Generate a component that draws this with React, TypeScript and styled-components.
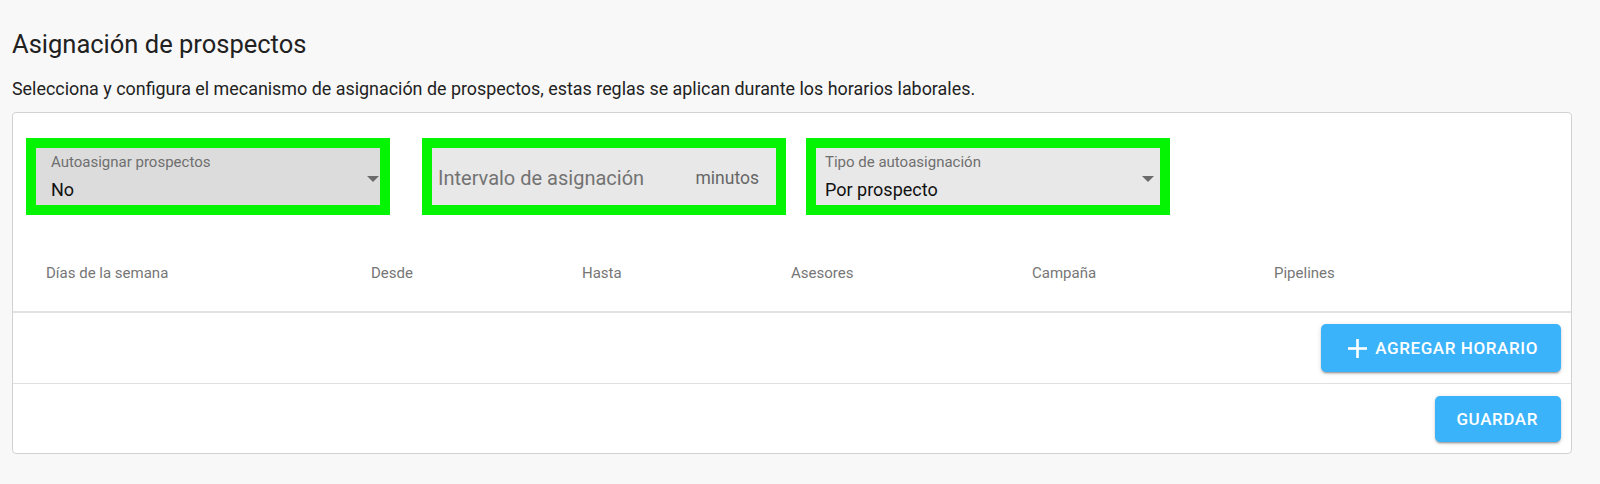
import React from "react";
import styled, { createGlobalStyle } from "styled-components";

const GlobalStyle = createGlobalStyle`
  html, body {
    margin: 0;
    padding: 0;
    background: #f8f8f8;
    font-family: Roboto, "Liberation Sans", Arial, sans-serif;
  }
  * { box-sizing: border-box; }
`;

const Page = styled.div`
  padding: 29px 0 0 12px;
  width: 1600px;
  min-height: 484px;
`;

const Title = styled.h1`
  margin: 0;
  font-size: 25.5px;
  line-height: 30px;
  font-weight: 400;
  color: #212121;
`;

const Description = styled.p`
  margin: 19px 0 0 0;
  font-size: 17.9px;
  line-height: 22px;
  color: #222;
`;

const Card = styled.div`
  margin-top: 12px;
  width: 1560px;
  background: #ffffff;
  border: 1px solid #d2d2d2;
  border-radius: 4px;
`;

const FieldsRow = styled.div`
  display: flex;
  padding: 25px 0 0 13px;
`;

const Highlight = styled.div<{ $gap: number }>`
  width: 364px;
  height: 77px;
  border: 10px solid #04f404;
  margin-right: ${(p) => p.$gap}px;
  display: flex;
`;

const FieldBox = styled.div<{ $bg: string; $pl: number; $pr: number }>`
  flex: 1;
  display: flex;
  align-items: center;
  background: ${(p) => p.$bg};
  padding-left: ${(p) => p.$pl}px;
  padding-right: ${(p) => p.$pr}px;
`;

const FieldText = styled.div`
  flex: 1;
  align-self: stretch;
  padding-top: 6px;
  display: flex;
  flex-direction: column;
`;

const FieldLabel = styled.span`
  font-size: 15px;
  line-height: 17px;
  color: #6f6f6f;
`;

const FieldValue = styled.span`
  margin-top: 8px;
  font-size: 18px;
  line-height: 22px;
  color: #111;
`;

const Placeholder = styled.span`
  flex: 1;
  margin-top: 2px;
  font-size: 20px;
  line-height: 24px;
  color: #737373;
`;

const Adornment = styled.span`
  margin-top: 2px;
  font-size: 17.5px;
  line-height: 20px;
  color: #666;
`;

const ArrowIcon = styled.svg<{ $mr: number }>`
  width: 12px;
  height: 6px;
  margin-top: 4px;
  margin-right: ${(p) => p.$mr}px;
  fill: #6b6b6b;
  flex: none;
`;

const HeaderRow = styled.div`
  display: grid;
  grid-template-columns: 325px 211px 209px 241px 242px 1fr;
  padding: 49px 0 29px 33px;
  border-bottom: 2px solid #e2e2e2;
`;

const HeaderCell = styled.span`
  font-size: 15px;
  line-height: 18px;
  color: #767676;
`;

const ActionRow = styled.div<{ $pt: number; $pb: number; $divider?: boolean }>`
  display: flex;
  justify-content: flex-end;
  padding: ${(p) => p.$pt}px 10px ${(p) => p.$pb}px 0;
  border-bottom: ${(p) => (p.$divider ? "1px solid #e0e0e0" : "none")};
`;

const Button = styled.button<{ $h: number; $pl: number }>`
  display: inline-flex;
  align-items: center;
  gap: 8px;
  height: ${(p) => p.$h}px;
  padding: 0 23px 0 ${(p) => p.$pl}px;
  border: none;
  border-radius: 5px;
  background: #3bb3fb;
  color: #ffffff;
  font-family: Roboto, "Liberation Sans", Arial, sans-serif;
  font-size: 17px;
  font-weight: 500;
  letter-spacing: 0.6px;
  text-transform: uppercase;
  box-shadow: 0px 3px 1px -2px rgba(0, 0, 0, 0.2),
    0px 2px 2px 0px rgba(0, 0, 0, 0.14), 0px 1px 5px 0px rgba(0, 0, 0, 0.12);
  cursor: pointer;
`;

const PlusIcon = styled.svg`
  width: 19px;
  height: 19px;
  fill: #ffffff;
  flex: none;
`;

const Arrow = ({ mr }: { mr: number }) => (
  <ArrowIcon $mr={mr} viewBox="0 0 12 6">
    <path d="M0 0 L12 0 L6 6 Z" />
  </ArrowIcon>
);

const headers = ["Días de la semana", "Desde", "Hasta", "Asesores", "Campaña", "Pipelines"];

export default function App() {
  return (
    <>
      <GlobalStyle />
      <Page>
        <Title>Asignación de prospectos</Title>
        <Description>
          Selecciona y configura el mecanismo de asignación de prospectos, estas reglas se aplican durante los horarios laborales.
        </Description>
        <Card>
          <FieldsRow>
            <Highlight $gap={32}>
              <FieldBox $bg="#dcdcdc" $pl={15} $pr={0}>
                <FieldText>
                  <FieldLabel>Autoasignar prospectos</FieldLabel>
                  <FieldValue>No</FieldValue>
                </FieldText>
                <Arrow mr={1} />
              </FieldBox>
            </Highlight>
            <Highlight $gap={20}>
              <FieldBox $bg="#e8e8e8" $pl={6} $pr={17}>
                <Placeholder>Intervalo de asignación</Placeholder>
                <Adornment>minutos</Adornment>
              </FieldBox>
            </Highlight>
            <Highlight $gap={0}>
              <FieldBox $bg="#e8e8e8" $pl={9} $pr={0}>
                <FieldText>
                  <FieldLabel>Tipo de autoasignación</FieldLabel>
                  <FieldValue>Por prospecto</FieldValue>
                </FieldText>
                <Arrow mr={6} />
              </FieldBox>
            </Highlight>
          </FieldsRow>
          <HeaderRow>
            {headers.map((h) => (
              <HeaderCell key={h}>{h}</HeaderCell>
            ))}
          </HeaderRow>
          <ActionRow $pt={11} $pb={11} $divider>
            <Button $h={48} $pl={27}>
              <PlusIcon viewBox="0 0 19 19">
                <rect x="0" y="8.2" width="19" height="2.6" />
                <rect x="8.2" y="0" width="2.6" height="19" />
              </PlusIcon>
              Agregar horario
            </Button>
          </ActionRow>
          <ActionRow $pt={12} $pb={11}>
            <Button $h={46} $pl={21}>Guardar</Button>
          </ActionRow>
        </Card>
      </Page>
    </>
  );
}
